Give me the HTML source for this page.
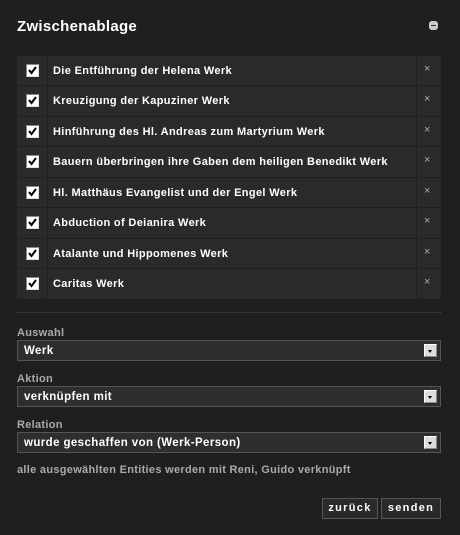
<!DOCTYPE html>
<html><head><meta charset="utf-8"><style>
body{margin:0;background:#1f1f1f;width:460px;height:535px;overflow:hidden;font-family:"Liberation Sans",sans-serif;color:#fff;position:relative}
.t{position:absolute;left:17px;top:18px;font-size:15px;font-weight:bold;letter-spacing:0.3px}
.min{position:absolute;left:429px;top:21px;width:9px;height:9px;background:#ccc;border-radius:3px}
.min:after{content:"";position:absolute;left:2px;top:4px;width:5px;height:1px;background:#333}
.row{position:absolute;left:17px;width:424px;height:29px;background:#2a2a2a}
.cb{position:absolute;left:9px;top:8px;width:11px;height:11px;background:#fff;border:1px solid #888;border-right-color:#ddd;border-bottom-color:#ddd}
.cb svg{position:absolute;left:1px;top:1px}
.sep{position:absolute;left:30px;top:0;width:1px;height:100%;background:#1f1f1f}
.sep2{position:absolute;left:399px;top:0;width:1px;height:100%;background:#1f1f1f}
.lbl{position:absolute;left:36px;top:9px;font-size:11px;font-weight:bold;letter-spacing:0.35px}
.x{position:absolute;left:407px;top:7px;font-size:11px;color:#aaa}
.dots{position:absolute;left:17px;top:312px;width:424px;border-top:1px dotted #444}
.fl{position:absolute;left:17px;font-size:11px;font-weight:bold;color:#aaa;letter-spacing:0.3px}
.sel{position:absolute;left:17px;width:422px;height:19px;background:#2e2e2e;border:1px solid #555;font-size:11.5px;font-weight:bold;line-height:20px;text-indent:6px;letter-spacing:0.4px}
.arr{position:absolute;right:3px;top:3px;width:13px;height:13px;background:#ddd;border:1px solid #fff;border-right-color:#888;border-bottom-color:#888;box-sizing:border-box}
.arr:after{content:"";position:absolute;left:3px;top:5px;border:2.5px solid transparent;border-top:3px solid #000}
.note{position:absolute;left:17px;top:464px;font-size:11px;font-weight:bold;color:#aaa;letter-spacing:0.3px}
.btn{position:absolute;top:498px;height:19px;border:1px solid #555;background:#2a2a2a;font-size:11px;font-weight:bold;line-height:19px;text-align:center;letter-spacing:1.3px}
</style></head><body>
<div class="t">Zwischenablage</div><div class="min"></div>
<div class="row" style="top:56px;height:29px"><div class="cb"><svg width="9" height="9"><path d="M1 4 L3.5 7 L8 1" stroke="#000" stroke-width="2" fill="none"/></svg></div><div class="sep"></div><div class="lbl">Die Entführung der Helena Werk</div><div class="sep2"></div><div class="x">×</div></div>
<div class="row" style="top:86px;height:30px"><div class="cb"><svg width="9" height="9"><path d="M1 4 L3.5 7 L8 1" stroke="#000" stroke-width="2" fill="none"/></svg></div><div class="sep"></div><div class="lbl">Kreuzigung der Kapuziner Werk</div><div class="sep2"></div><div class="x">×</div></div>
<div class="row" style="top:117px;height:29px"><div class="cb"><svg width="9" height="9"><path d="M1 4 L3.5 7 L8 1" stroke="#000" stroke-width="2" fill="none"/></svg></div><div class="sep"></div><div class="lbl">Hinführung des Hl. Andreas zum Martyrium Werk</div><div class="sep2"></div><div class="x">×</div></div>
<div class="row" style="top:147px;height:30px"><div class="cb"><svg width="9" height="9"><path d="M1 4 L3.5 7 L8 1" stroke="#000" stroke-width="2" fill="none"/></svg></div><div class="sep"></div><div class="lbl">Bauern überbringen ihre Gaben dem heiligen Benedikt Werk</div><div class="sep2"></div><div class="x">×</div></div>
<div class="row" style="top:178px;height:29px"><div class="cb"><svg width="9" height="9"><path d="M1 4 L3.5 7 L8 1" stroke="#000" stroke-width="2" fill="none"/></svg></div><div class="sep"></div><div class="lbl">Hl. Matthäus Evangelist und der Engel Werk</div><div class="sep2"></div><div class="x">×</div></div>
<div class="row" style="top:208px;height:30px"><div class="cb"><svg width="9" height="9"><path d="M1 4 L3.5 7 L8 1" stroke="#000" stroke-width="2" fill="none"/></svg></div><div class="sep"></div><div class="lbl">Abduction of Deianira Werk</div><div class="sep2"></div><div class="x">×</div></div>
<div class="row" style="top:239px;height:29px"><div class="cb"><svg width="9" height="9"><path d="M1 4 L3.5 7 L8 1" stroke="#000" stroke-width="2" fill="none"/></svg></div><div class="sep"></div><div class="lbl">Atalante und Hippomenes Werk</div><div class="sep2"></div><div class="x">×</div></div>
<div class="row" style="top:269px;height:30px"><div class="cb"><svg width="9" height="9"><path d="M1 4 L3.5 7 L8 1" stroke="#000" stroke-width="2" fill="none"/></svg></div><div class="sep"></div><div class="lbl">Caritas Werk</div><div class="sep2"></div><div class="x">×</div></div>
<div class="dots"></div>
<div class="fl" style="top:327px">Auswahl</div>
<div class="sel" style="top:340px">Werk<div class="arr"></div></div>
<div class="fl" style="top:373px">Aktion</div>
<div class="sel" style="top:386px">verknüpfen mit<div class="arr"></div></div>
<div class="fl" style="top:419px">Relation</div>
<div class="sel" style="top:432px">wurde geschaffen von (Werk-Person)<div class="arr"></div></div>
<div class="note">alle ausgewählten Entities werden mit Reni, Guido verknüpft</div>
<div class="btn" style="left:322px;width:54px">zurück</div>
<div class="btn" style="left:381px;width:58px">senden</div>
</body></html>
